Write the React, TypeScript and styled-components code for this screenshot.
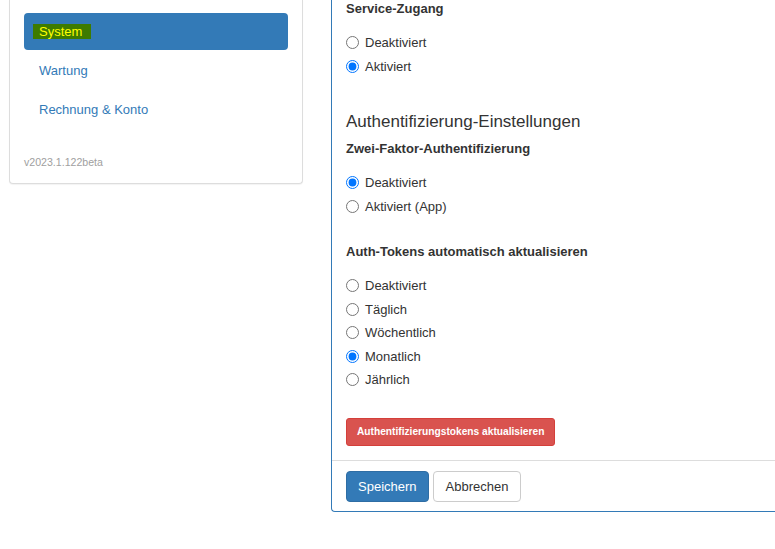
import React from "react";
import styled, { createGlobalStyle } from "styled-components";

const Global = createGlobalStyle`
  html, body {
    margin: 0;
    padding: 0;
    background: #fff;
    overflow: hidden;
  }
  body {
    font-family: "Liberation Sans", Arial, sans-serif;
    font-size: 13px;
    color: #333;
  }
  * { box-sizing: border-box; }
`;

const Page = styled.div`
  display: flex;
  align-items: flex-start;
  gap: 28px;
  padding-left: 9px;
  width: 100%;
`;

const SidePanel = styled.aside`
  width: 294px;
  flex-shrink: 0;
  background: #fff;
  border: 1px solid #ddd;
  border-top: none;
  border-radius: 0 0 4px 4px;
  box-shadow: 0 1px 1px rgba(0, 0, 0, 0.05);
  padding: 13px 14px 13px 14px;
`;

const NavList = styled.ul`
  list-style: none;
  margin: 0;
  padding: 0;
  display: flex;
  flex-direction: column;
  gap: 2px;
`;

const NavItem = styled.li<{ $active?: boolean }>`
  height: 37px;
  padding: 8px 15px;
  line-height: 21px;
  border-radius: 4px;
  font-size: 13px;
  background: ${(p) => (p.$active ? "#337ab7" : "transparent")};
  color: ${(p) => (p.$active ? "#fff" : "#337ab7")};
`;

const Marker = styled.span`
  display: inline-block;
  line-height: 15px;
  padding: 0 9px 0 6px;
  margin-left: -6px;
  background: #3e7b00;
  color: #ffff00;
`;

const Version = styled.div`
  margin-top: 27px;
  font-size: 10.6px;
  line-height: 15px;
  color: #a0a0a0;
`;

const MainPanel = styled.section`
  flex: 1;
  min-width: 0;
  border-left: 1px solid #337ab7;
  border-bottom: 1px solid #337ab7;
  border-bottom-left-radius: 4px;
  background: #fff;
`;

const Body = styled.div`
  padding: 0 14px 14px 14px;
`;

const GroupLabel = styled.div<{ $mt?: number }>`
  font-weight: bold;
  font-size: 13px;
  line-height: 18px;
  margin-top: ${(p) => p.$mt ?? 0}px;
`;

const Heading = styled.h4`
  margin: 33.5px 0 0 0;
  font-size: 17px;
  line-height: 19px;
  font-weight: 400;
  color: #333;
`;

const RadioGroup = styled.div`
  margin-top: 13px;
  display: flex;
  flex-direction: column;
`;

const RadioRow = styled.label`
  display: flex;
  align-items: center;
  gap: 6px;
  height: 23.5px;
  font-size: 13px;
  color: #333;
`;

const Radio = styled.input`
  margin: 0;
  width: 13px;
  height: 13px;
`;

const DangerButton = styled.button`
  margin-top: 26.5px;
  display: inline-block;
  height: 28px;
  padding: 5px 10px;
  line-height: 16px;
  font-family: "Liberation Sans", Arial, sans-serif;
  font-size: 10.2px;
  font-weight: bold;
  color: #fff;
  background: #d9534f;
  border: 1px solid #d43f3a;
  border-radius: 3px;
`;

const Footer = styled.div`
  border-top: 1px solid #ddd;
  padding: 10px 14px 9px 14px;
  display: flex;
  gap: 4px;
`;

const Button = styled.button<{ $primary?: boolean }>`
  height: 31px;
  padding: 6px ${(p) => (p.$primary ? 11 : 12)}px;
  line-height: 17px;
  font-family: "Liberation Sans", Arial, sans-serif;
  font-size: 13px;
  border-radius: 4px;
  border: 1px solid ${(p) => (p.$primary ? "#2e6da4" : "#ccc")};
  background: ${(p) => (p.$primary ? "#337ab7" : "#fff")};
  color: ${(p) => (p.$primary ? "#fff" : "#333")};
`;

type Opt = { label: string; checked?: boolean };

const Group = ({ name, options }: { name: string; options: Opt[] }) => (
  <RadioGroup>
    {options.map((o) => (
      <RadioRow key={o.label}>
        <Radio type="radio" name={name} defaultChecked={!!o.checked} />
        {o.label}
      </RadioRow>
    ))}
  </RadioGroup>
);

export default function App() {
  return (
    <>
      <Global />
      <Page>
        <SidePanel>
          <NavList>
            <NavItem $active>
              <Marker>System</Marker>
            </NavItem>
            <NavItem>Wartung</NavItem>
            <NavItem>Rechnung &amp; Konto</NavItem>
          </NavList>
          <Version>v2023.1.122beta</Version>
        </SidePanel>
        <MainPanel>
          <Body>
            <GroupLabel>Service-Zugang</GroupLabel>
            <Group
              name="service"
              options={[{ label: "Deaktiviert" }, { label: "Aktiviert", checked: true }]}
            />
            <Heading>Authentifizierung-Einstellungen</Heading>
            <GroupLabel $mt={9.5}>Zwei-Faktor-Authentifizierung</GroupLabel>
            <Group
              name="twofa"
              options={[{ label: "Deaktiviert", checked: true }, { label: "Aktiviert (App)" }]}
            />
            <GroupLabel $mt={25}>Auth-Tokens automatisch aktualisieren</GroupLabel>
            <Group
              name="tokens"
              options={[
                { label: "Deaktiviert" },
                { label: "Täglich" },
                { label: "Wöchentlich" },
                { label: "Monatlich", checked: true },
                { label: "Jährlich" },
              ]}
            />
            <DangerButton>Authentifizierungstokens aktualisieren</DangerButton>
          </Body>
          <Footer>
            <Button $primary>Speichern</Button>
            <Button>Abbrechen</Button>
          </Footer>
        </MainPanel>
      </Page>
    </>
  );
}
